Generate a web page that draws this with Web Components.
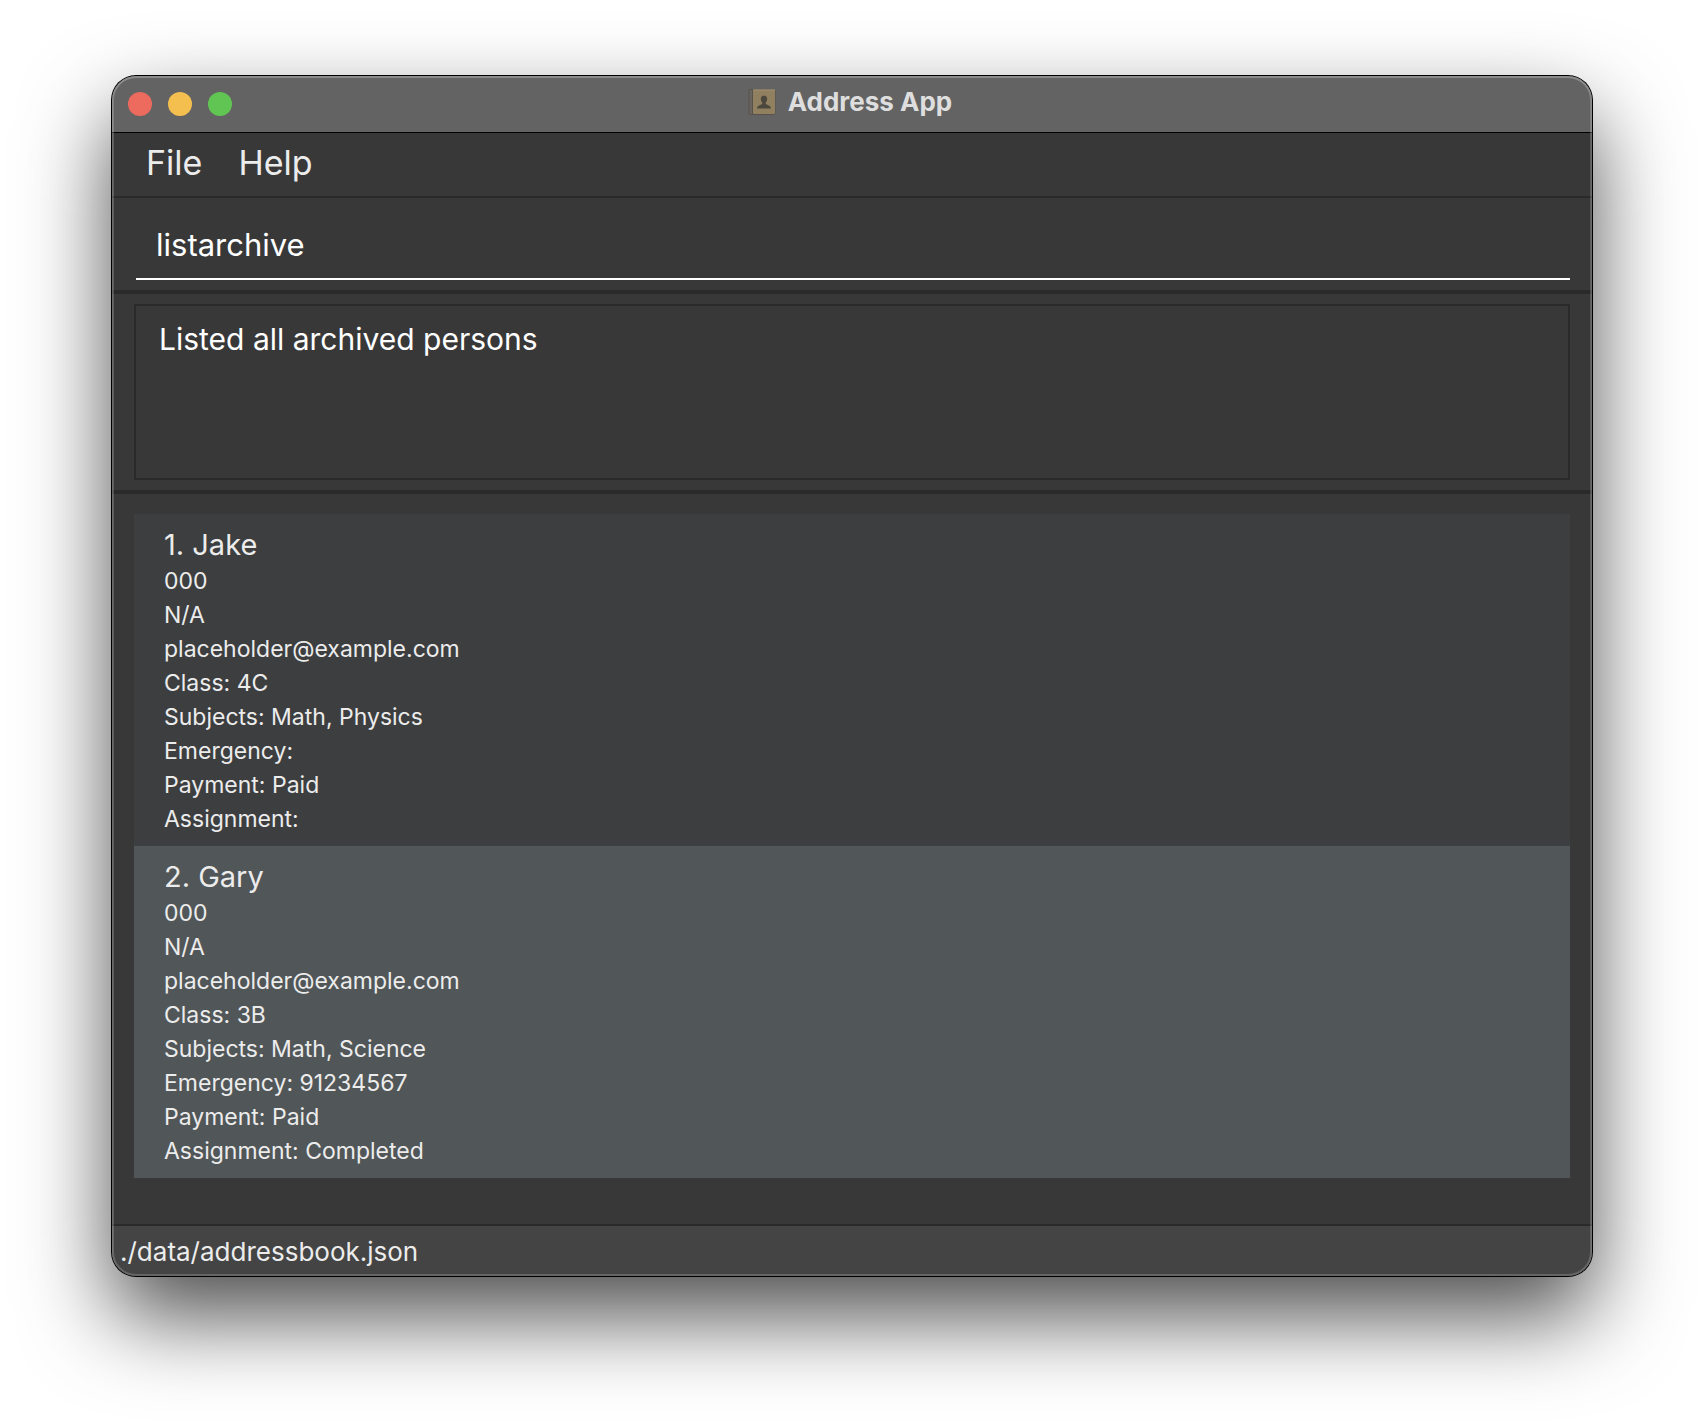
<!DOCTYPE html>
<html lang="en">
<head>
<meta charset="utf-8">
<title>Address App</title>
<style>
  html { background: #fff; }
  body { margin: 0; font-family: Inter, "Liberation Sans", sans-serif; color: #ececec; }
</style>
</head>
<body>
<desktop-stage>
  <app-window>
    <title-bar slot="title">Address App</title-bar>
    <menu-bar items="File,Help"></menu-bar>
    <command-box value="listarchive"></command-box>
    <result-display value="Listed all archived persons"></result-display>
    <person-list>
      <person-card heading="1. Jake">
        <li>000</li><li>N/A</li><li>placeholder@example.com</li><li>Class: 4C</li><li>Subjects: Math, Physics</li><li>Emergency:</li><li>Payment: Paid</li><li>Assignment:</li>
      </person-card>
      <person-card heading="2. Gary">
        <li>000</li><li>N/A</li><li>placeholder@example.com</li><li>Class: 3B</li><li>Subjects: Math, Science</li><li>Emergency: 91234567</li><li>Payment: Paid</li><li>Assignment: Completed</li>
      </person-card>
    </person-list>
    <status-bar>./data/addressbook.json</status-bar>
  </app-window>
</desktop-stage>
<script>
function define(name, html, setup) {
  const tpl = document.createElement('template');
  tpl.innerHTML = html;
  customElements.define(name, class extends HTMLElement {
    constructor() {
      super();
      this.attachShadow({ mode: 'open' }).appendChild(tpl.content.cloneNode(true));
    }
    connectedCallback() { if (setup) setup(this, this.shadowRoot); }
  });
}

define('desktop-stage', `<style>
  :host { display: flex; box-sizing: border-box; min-height: 100vh; padding: 76px 112px 148px; overflow: hidden; }
</style><slot></slot>`);

define('app-window', `<style>
  :host { position: relative; flex: 1; min-width: 0; display: flex; flex-direction: column; border-radius: 24px;
    background: #383838; box-shadow: 0 0 0 1px #000, 0 40px 88px rgba(0,0,0,.7); }
  main { flex: 1; display: flex; flex-direction: column; border-radius: inherit; overflow: hidden; }
  .rim { position: absolute; inset: 0; border-radius: inherit; pointer-events: none;
    box-shadow: inset 0 0 0 2px rgba(255,255,255,.18), inset 0 1px 0 1px rgba(255,255,255,.1); }
</style><main><slot name="title"></slot><slot></slot></main><div class="rim"></div>`);

define('title-bar', `<style>
  :host { display: grid; grid-template-columns: 1fr auto 1fr; align-items: center; height: 56px; padding: 0 16px;
    background: #636363; border-bottom: 1px solid #000; color: #dedede; }
  .lights { display: flex; gap: 16px; }
  button { width: 24px; height: 24px; padding: 0; border: 0; border-radius: 50%; }
  .close { background: #ed6a5e; } .min { background: #f5bf4f; } .zoom { background: #61c554; }
  h1 { display: flex; align-items: center; gap: 12px; margin: 0 4px 4px 0; font-size: 26px; line-height: 32px; font-weight: 700; }
  svg { width: 28px; height: 28px; }
</style>
<div class="lights"><button class="close" aria-label="Close"></button><button class="min" aria-label="Minimise"></button><button class="zoom" aria-label="Zoom"></button></div>
<h1><svg viewBox="0 0 28 28" aria-hidden="true">
  <rect x="0.5" y="1" width="27" height="26" rx="2" fill="#57524b"/>
  <rect x="1.5" y="2" width="2.5" height="24" fill="#696460"/>
  <rect x="5" y="1.5" width="22" height="24.5" rx="1" fill="#91805f"/>
  <path d="M5 2h22" stroke="#a08f70" stroke-width="1"/>
  <path d="M16 7.500c-2 0-3.200 1.300-3.200 3.300 0 1.700.6 2.800 1.400 3.700v1.500c-1.500 1-5 1.300-5.200 4.500h14c-.2-3.200-3.700-3.500-5.200-4.500v-1.500c.8-.9 1.400-2 1.400-3.700 0-2-1.200-3.300-3.200-3.300z" fill="#4d483f"/>
</svg><slot></slot></h1>`);

define('menu-bar', `<style>
  :host { display: flex; height: 63px; padding: 0 16px; border-bottom: 2px solid #2a2a2a; }
  button { padding: 0 18px; border: 0; background: none; color: #ececec; font: 34px/60px Inter, "Liberation Sans", sans-serif; }
  button { align-self: flex-start; }
</style>`, (host, root) => {
  for (const label of host.getAttribute('items').split(',')) {
    const b = document.createElement('button');
    b.textContent = label;
    root.appendChild(b);
  }
});

define('command-box', `<style>
  :host { display: flex; padding: 14px 22px 10px 24px; border-bottom: 4px solid #2a2a2a; }
  input { flex: 1; min-width: 0; box-sizing: border-box; height: 68px; padding: 0 20px 2px; border: 0; border-bottom: 2px solid #fff;
    outline: 0; background: none; color: #fff; font: 31px Inter, "Liberation Sans", sans-serif; }
</style><input type="text" aria-label="Command">`, (host, root) => {
  root.querySelector('input').value = host.getAttribute('value');
});

define('result-display', `<style>
  :host { display: flex; padding: 10px 22px; border-bottom: 4px solid #2a2a2a; }
  textarea { flex: 1; min-width: 0; box-sizing: border-box; height: 176px; margin: 0; padding: 13px 23px; border: 2px solid #2a2a2a;
    outline: 0; resize: none; background: none; color: #fff; font: 30px/40px Inter, "Liberation Sans", sans-serif; }
</style><textarea readonly aria-label="Result"></textarea>`, (host, root) => {
  root.querySelector('textarea').value = host.getAttribute('value');
});

define('person-list', `<style>
  :host { flex: 1; display: flex; flex-direction: column; padding: 20px 22px; }
  ::slotted(:nth-child(odd)) { background: #3c3e3f; }
  ::slotted(:nth-child(even)) { background: #515658; }
</style><slot></slot>`);

define('person-card', `<style>
  :host { display: block; padding: 11px 30px 10px; }
  h2 { margin: 0; font-size: 29px; line-height: 39px; font-weight: 400; }
  ul { margin: 0; padding: 0; list-style: none; font-size: 23px; line-height: 34px; }
</style><h2></h2><ul><slot></slot></ul>`, (host, root) => {
  root.querySelector('h2').textContent = host.getAttribute('heading');
});

define('status-bar', `<style>
  :host { display: block; padding: 2px 8px 0; border-top: 2px solid #2a2a2a; background: #444; font-size: 26px; line-height: 48px; }
</style><slot></slot>`);
</script>
</body>
</html>
